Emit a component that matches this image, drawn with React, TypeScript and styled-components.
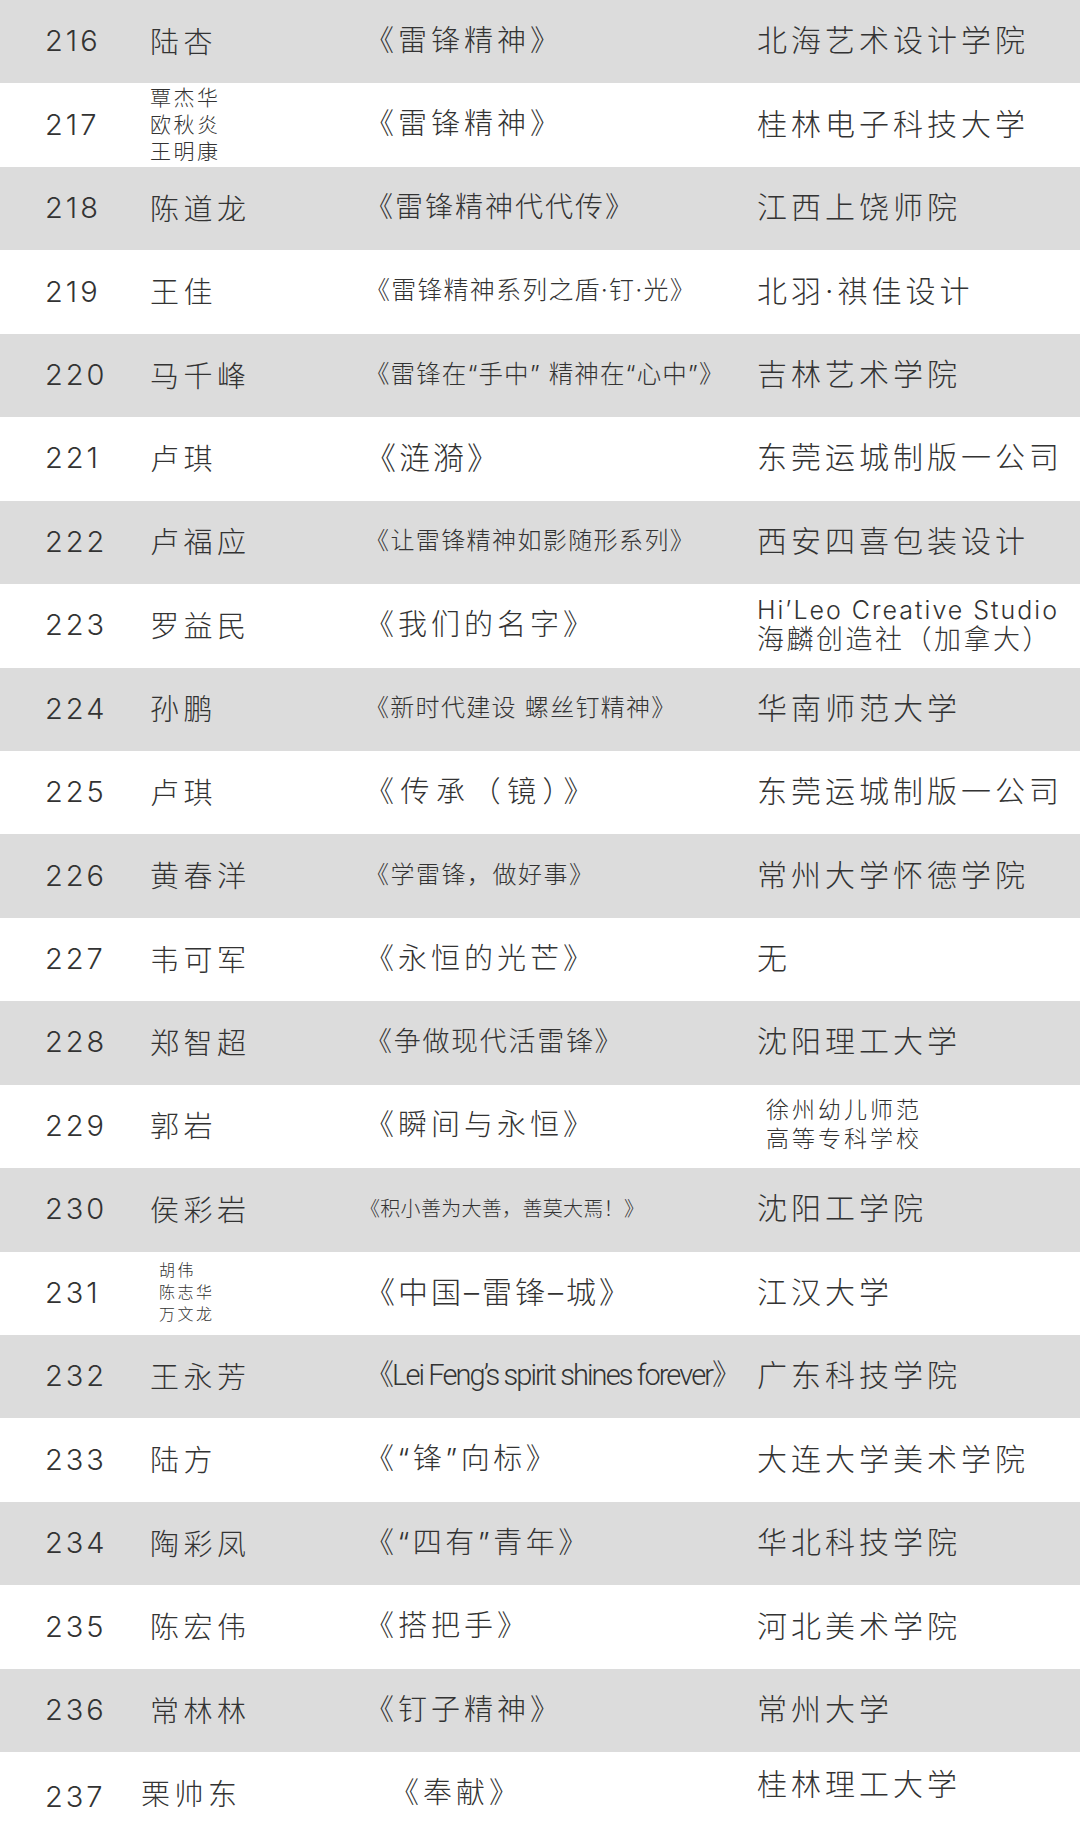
import React from "react";
import styled, { createGlobalStyle } from "styled-components";

const Global = createGlobalStyle`
  html, body { margin: 0; padding: 0; background: #ffffff; }
  body { font-family: Inter, "Noto Sans CJK SC", sans-serif; color: #333333; }
`;

type Title = { text: string; size?: number; ls?: number; latin?: boolean };
type Entry = {
  no: string;
  names: string[];
  title: Title;
  org: string[];
  orgSmall?: boolean;
  namesSize?: number;
  latinOrg?: boolean;
};

const data: Entry[] = [
  { no: "216", names: ["陆杏"], title: { text: "《雷锋精神》" }, org: ["北海艺术设计学院"] },
  { no: "217", names: ["覃杰华", "欧秋炎", "王明康"], namesSize: 21, title: { text: "《雷锋精神》" }, org: ["桂林电子科技大学"] },
  { no: "218", names: ["陈道龙"], title: { text: "《雷锋精神代代传》", size: 28, ls: 2 }, org: ["江西上饶师院"] },
  { no: "219", names: ["王佳"], title: { text: "《雷锋精神系列之盾·钉·光》", size: 25, ls: 1.2 }, org: ["北羽·祺佳设计"] },
  { no: "220", names: ["马千峰"], title: { text: "《雷锋在“手中” 精神在“心中”》", size: 24.5, ls: 1.1 }, org: ["吉林艺术学院"] },
  { no: "221", names: ["卢琪"], title: { text: "《涟漪》", size: 31, ls: 3 }, org: ["东莞运城制版一公司"] },
  { no: "222", names: ["卢福应"], title: { text: "《让雷锋精神如影随形系列》", size: 24, ls: 1.4 }, org: ["西安四喜包装设计"] },
  { no: "223", names: ["罗益民"], title: { text: "《我们的名字》" }, org: ["Hi’Leo Creative Studio", "海麟创造社（加拿大）"], latinOrg: true },
  { no: "224", names: ["孙鹏"], title: { text: "《新时代建设 螺丝钉精神》", size: 24, ls: 1.3 }, org: ["华南师范大学"] },
  { no: "225", names: ["卢琪"], title: { text: "《传承（镜）》", size: 29, ls: 6.5 }, org: ["东莞运城制版一公司"] },
  { no: "226", names: ["黄春洋"], title: { text: "《学雷锋，做好事》", size: 24, ls: 1.5 }, org: ["常州大学怀德学院"] },
  { no: "227", names: ["韦可军"], title: { text: "《永恒的光芒》" }, org: ["无"] },
  { no: "228", names: ["郑智超"], title: { text: "《争做现代活雷锋》", size: 27, ls: 1.7 }, org: ["沈阳理工大学"] },
  { no: "229", names: ["郭岩"], title: { text: "《瞬间与永恒》" }, org: ["徐州幼儿师范", "高等专科学校"], orgSmall: true },
  { no: "230", names: ["侯彩岩"], title: { text: "《积小善为大善，善莫大焉！》", size: 20, ls: 0.3 }, org: ["沈阳工学院"] },
  { no: "231", names: ["胡伟", "陈志华", "万文龙"], namesSize: 16, title: { text: "《中国–雷锋–城》", size: 30, ls: 3 }, org: ["江汉大学"] },
  { no: "232", names: ["王永芳"], title: { text: "《Lei Feng’s spirit shines forever》", size: 29, ls: -1.9, latin: true }, org: ["广东科技学院"] },
  { no: "233", names: ["陆方"], title: { text: "《“锋”向标》", size: 29, ls: 3.5 }, org: ["大连大学美术学院"] },
  { no: "234", names: ["陶彩凤"], title: { text: "《“四有”青年》", size: 29, ls: 3.5 }, org: ["华北科技学院"] },
  { no: "235", names: ["陈宏伟"], title: { text: "《搭把手》" }, org: ["河北美术学院"] },
  { no: "236", names: ["常林林"], title: { text: "《钉子精神》" }, org: ["常州大学"] },
  { no: "237", names: ["栗帅东"], title: { text: "《奉献》" }, org: ["桂林理工大学"] },
];

const Table = styled.div`
  display: flex;
  flex-direction: column;
  width: 1080px;
`;

const Row = styled.div<{ $grey: boolean; $last?: boolean }>`
  display: grid;
  grid-template-columns: ${(p) => (p.$last ? "96px 249px 367px 1fr" : "105px 215px 392px 1fr")};
  align-items: center;
  height: 83.45px;
  box-sizing: border-box;
  padding-left: 45px;
  background: ${(p) => (p.$grey ? "#dcdcdc" : "#ffffff")};
`;

const Num = styled.div<{ $shift: number }>`
  font-family: Inter, "Noto Sans", sans-serif;
  font-weight: 300;
  font-size: 29px;
  letter-spacing: 3px;
  color: #333333;
  line-height: 1;
  transform: translateY(${(p) => p.$shift}px);
`;

const Names = styled.div<{ $size: number; $multi: boolean }>`
  display: flex;
  flex-direction: column;
  font-family: "Noto Sans CJK SC", sans-serif;
  font-weight: 300;
  font-size: ${(p) => p.$size}px;
  letter-spacing: ${(p) => (p.$multi ? (p.$size < 20 ? 2.5 : 2.5) : 4.5)}px;
  line-height: ${(p) => (p.$multi ? (p.$size < 20 ? "22px" : "27px") : "1.1")};
  color: #333333;
  padding-left: ${(p) => (p.$size < 20 ? 9 : 0)}px;
  transform: translateY(${(p) => (p.$multi ? (p.$size < 20 ? -2 : -2) : -1)}px);
`;

const TitleText = styled.div<{ $size: number; $ls: number; $latin?: boolean; $nudge: number }>`
  font-family: ${(p) => (p.$latin ? 'Roboto, "Noto Sans CJK SC", sans-serif' : 'Inter, "Noto Sans CJK SC", sans-serif')};
  font-weight: 300;
  font-size: ${(p) => p.$size}px;
  letter-spacing: ${(p) => p.$ls}px;
  white-space: nowrap;
  line-height: 1.1;
  color: #333333;
  margin-left: ${(p) => p.$nudge}px;
  transform: translateY(-1px);
`;

const Org = styled.div<{ $small?: boolean; $latin?: boolean; $shift: number }>`
  display: flex;
  flex-direction: column;
  font-family: Inter, "Noto Sans CJK SC", sans-serif;
  font-weight: 300;
  font-size: ${(p) => (p.$small ? 23 : p.$latin ? 27 : 30)}px;
  letter-spacing: ${(p) => (p.$small ? 3 : p.$latin ? 2.5 : 4)}px;
  line-height: ${(p) => (p.$small || p.$latin ? "29px" : "1.1")};
  padding-left: ${(p) => (p.$small ? 9 : 0)}px;
  white-space: nowrap;
  color: #333333;
  transform: translateY(${(p) => p.$shift}px);
`;

const LatinLine = styled.span`
  font-family: Inter, "Noto Sans", sans-serif;
  font-weight: 300;
  font-size: 25px;
  letter-spacing: 2px;
`;

export default function App() {
  return (
    <>
      <Global />
      <Table>
        {data.map((e, i) => {
          const last = i === data.length - 1;
          const multi = e.names.length > 1;
          return (
            <Row key={e.no} $grey={i % 2 === 0} $last={last}>
              <Num $shift={last ? 3 : -1}>{e.no}</Num>
              <Names $size={e.namesSize ?? 29} $multi={multi}>
                {e.names.map((n) => (
                  <span key={n}>{n}</span>
                ))}
              </Names>
              <TitleText
                $size={e.title.size ?? 29}
                $ls={e.title.ls ?? 4}
                $latin={e.title.latin}
                $nudge={e.no === "230" ? -5 : 0}
              >
                {e.title.text}
              </TitleText>
              <Org $small={e.orgSmall} $latin={e.latinOrg} $shift={last ? -9 : -1}>
                {e.org.map((o, k) =>
                  e.latinOrg && k === 0 ? <LatinLine key={o}>{o}</LatinLine> : <span key={o}>{o}</span>
                )}
              </Org>
            </Row>
          );
        })}
      </Table>
    </>
  );
}
